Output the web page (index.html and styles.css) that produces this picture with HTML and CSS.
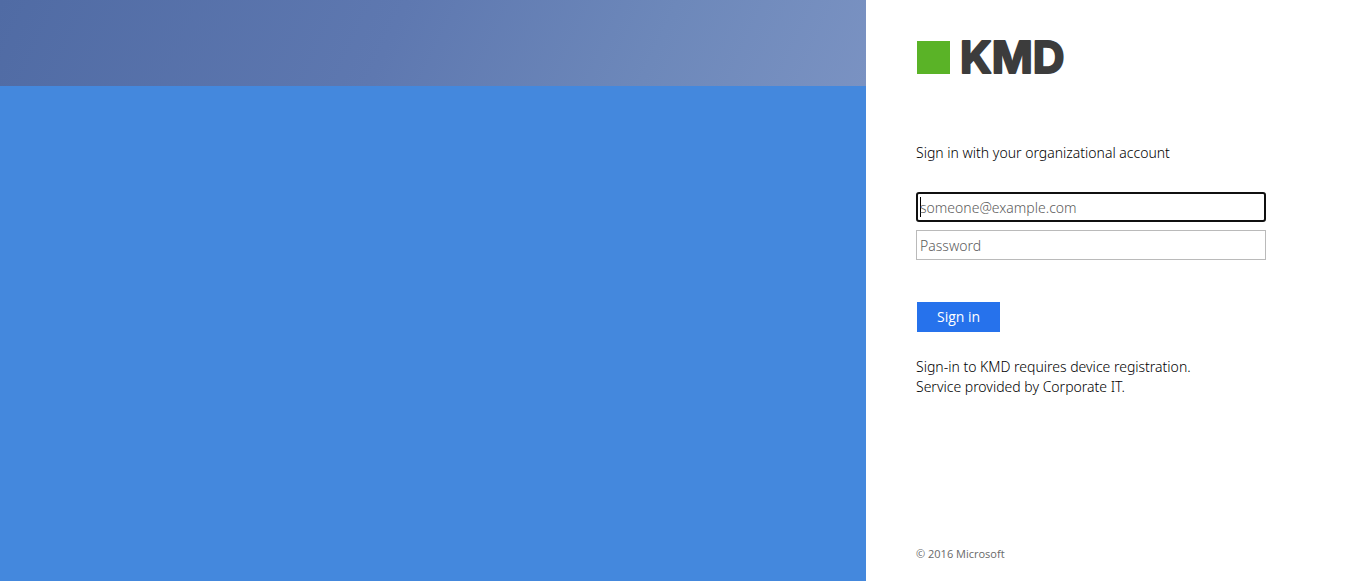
FILE: index.html
```html
<!DOCTYPE html>
<html lang="en">
<head>
<meta charset="utf-8">
<meta name="viewport" content="width=device-width, initial-scale=1">
<title>Sign In</title>
<link rel="stylesheet" href="styles.css">
</head>
<body>
<div class="page">
  <div class="branding">
    <div class="illustration"></div>
  </div>
  <main class="panel">
    <header class="brand">
      <svg class="logo" width="160" height="36" viewBox="0 0 160 36" role="img" aria-label="KMD">
        <rect class="logo-square" x="1" y="1" width="33" height="33"/>
        <text class="logo-name" x="44" y="33">KMD</text>
      </svg>
    </header>
    <form class="login" action="#" method="post">
      <p class="message">Sign in with your organizational account</p>
      <div class="fields">
        <input class="field" type="email" name="user" aria-label="User account" placeholder="someone@example.com" autocomplete="off" autofocus>
        <input class="field" type="password" name="password" aria-label="Password" placeholder="Password" autocomplete="off">
      </div>
      <button class="submit" type="submit">Sign in</button>
    </form>
    <p class="intro">Sign-in to KMD requires device registration.<br>Service provided by Corporate IT.</p>
    <footer class="footer">© 2016 Microsoft</footer>
  </main>
</div>
</body>
</html>
```
FILE: styles.css
```css
* {
  box-sizing: border-box;
}

body {
  margin: 0;
  background: #fff;
  color: #000;
  font-family: "Segoe UI", "Noto Sans", "Open Sans", sans-serif;
  font-size: 14px;
  font-weight: 300;
  line-height: 20px;
}

p {
  margin: 0;
}

.page {
  display: flex;
  min-height: 100vh;
}

.branding {
  flex: 1;
  background: #4488dd;
}

.illustration {
  height: 86px;
  background: linear-gradient(115deg, #506ba4, #5e78b0 45%, #6d88ba 75%, #7a92c2);
}

.panel {
  display: flex;
  flex-direction: column;
  width: 500px;
  padding: 40px 100px 18px 50px;
}

.logo {
  display: block;
  overflow: visible;
}

.logo-square {
  fill: #5ab327;
}

.logo-name {
  fill: #3c3c3c;
  stroke: #3c3c3c;
  stroke-width: 2px;
  stroke-linejoin: round;
  font-family: Inter, sans-serif;
  font-size: 44px;
  font-weight: 700;
}

.message {
  margin-top: 67px;
}

.fields {
  display: grid;
  gap: 8px;
  margin-top: 29px;
}

.field {
  width: 100%;
  height: 30px;
  padding: 0 3px;
  border: 1px solid #bababa;
  border-radius: 0;
  background: #fff;
  color: #000;
  font: inherit;
}

.field::placeholder {
  color: #5c5c5c;
}

.field:focus {
  padding: 0 2px;
  border: 2px solid #101010;
  border-radius: 3px;
  outline: none;
}

.field:focus:placeholder-shown {
  background: linear-gradient(#000, #000) 2px 3px / 1px 20px no-repeat #fff;
  caret-color: transparent;
}

.submit {
  display: block;
  height: 30px;
  margin: 42px 0 0 1px;
  padding: 0 20px;
  border: 0;
  background: #2672ec;
  color: #fff;
  font-family: "Segoe UI", "Open Sans", sans-serif;
  font-size: 14px;
  font-weight: 400;
  line-height: 20px;
}

.intro {
  margin-top: 25px;
}

.footer {
  margin-top: auto;
  color: #696969;
  font-family: "Segoe UI", "Open Sans", sans-serif;
  font-size: 11px;
  font-weight: 400;
  line-height: 18px;
}
```
